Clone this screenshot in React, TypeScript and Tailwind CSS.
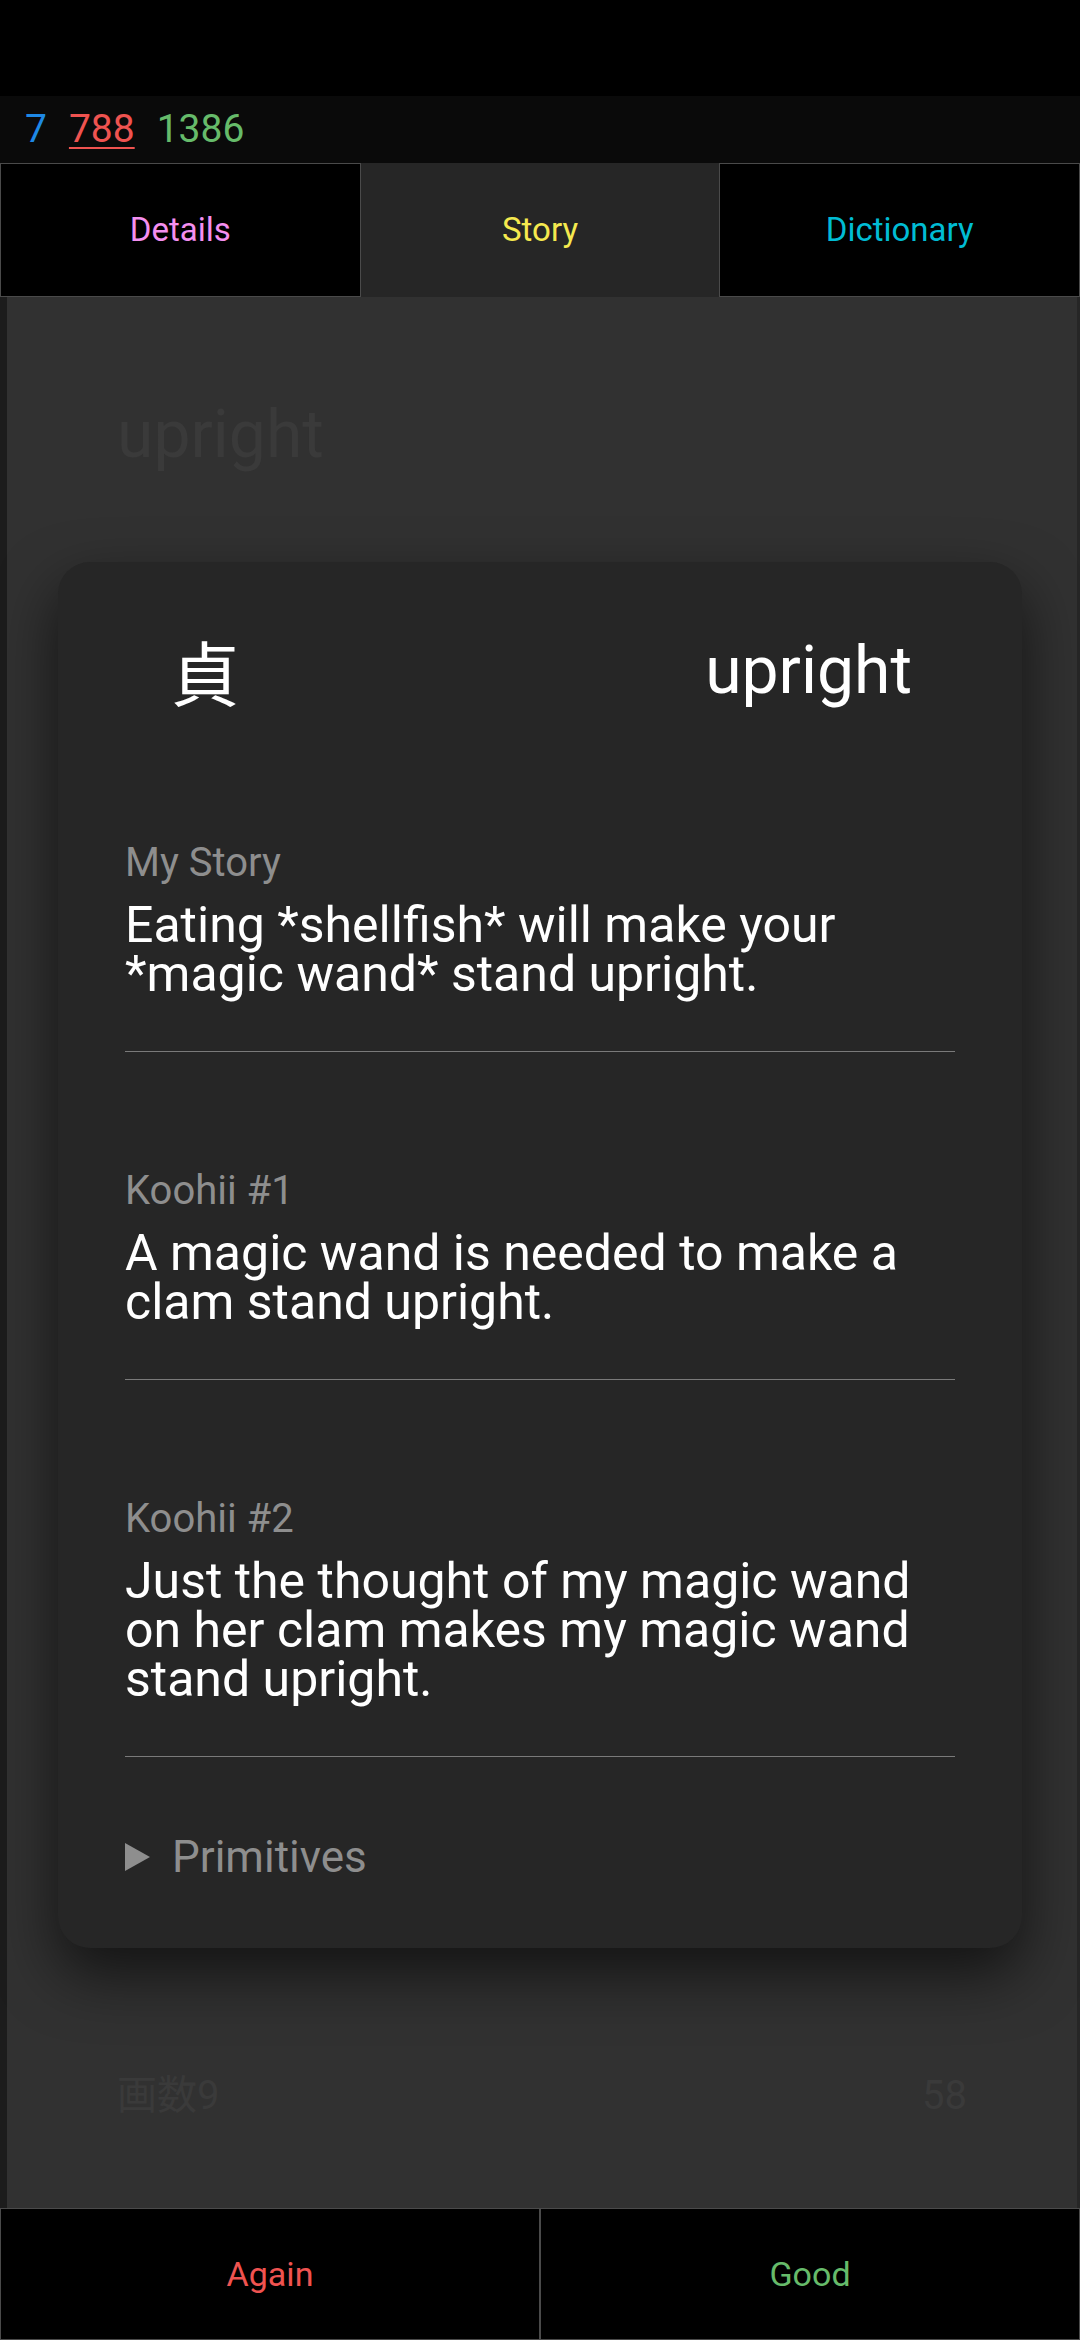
import type React from "react"

const stories = [
  { label: "My Story", text: "Eating *shellfish* will make your *magic wand* stand upright." },
  { label: "Koohii #1", text: "A magic wand is needed to make a clam stand upright." },
  { label: "Koohii #2", text: "Just the thought of my magic wand on her clam makes my magic wand stand upright." },
]

export default function App() {
  return (
    <div className="w-[1080px] h-[2340px] flex flex-col bg-black font-['Roboto',sans-serif] overflow-hidden">
      <div className="h-[96px] bg-black shrink-0" />

      <div className="h-[67px] shrink-0 bg-[#0a0a0a] flex items-center gap-[22px] px-[25px] text-[39px] leading-none">
        <span className="text-[#1e88e5]">7</span>
        <span className="text-[#ef5350] underline decoration-2 underline-offset-[5px]">788</span>
        <span className="text-[#66bb6a]">1386</span>
      </div>

      <div className="h-[134px] shrink-0 flex text-[33px]">
        <Tab label="Details" color="text-[#f48ff0]" />
        <Tab label="Story" color="text-[#f5e94f]" active />
        <Tab label="Dictionary" color="text-[#00bcd4]" />
      </div>

      <main className="relative flex-1 flex bg-[#313131]">
        <div className="w-[7px] bg-[#1c1c1c]" />
        <div className="flex-1 flex flex-col px-[110px] pt-[98px] pb-[90px]">
          <div className="text-[66px] leading-[80px] text-[#3a3a3a]">upright</div>
          <div className="mt-auto flex items-center justify-between text-[40px] leading-[44px] text-[#3a3a3a]">
            <span className="font-['Roboto','Noto_Sans_CJK_JP',sans-serif]">画数9</span>
            <span>58</span>
          </div>
        </div>
        <div className="w-[3px] bg-[#262626]" />

        <StoryCard />
      </main>

      <div className="h-[132px] shrink-0 flex text-[34px]">
        <button className="flex-1 bg-black border border-[#4a4a4a] text-[#ef5350]">Again</button>
        <button className="flex-1 bg-black border border-[#4a4a4a] text-[#66bb6a]">Good</button>
      </div>
    </div>
  )
}

function Tab({ label, color, active }: { label: string; color: string; active?: boolean }) {
  return (
    <div
      className={`flex-1 flex items-center justify-center ${color} ${
        active ? "bg-[#262626]" : "bg-black border border-[#4a4a4a]"
      }`}
    >
      {label}
    </div>
  )
}

function StoryCard() {
  return (
    <div className="absolute left-[58px] top-[265px] w-[964px] rounded-[32px] bg-[#262626] px-[67px] pt-[69px] pb-[66px] shadow-[0_26px_60px_rgba(0,0,0,0.6)]">
      <div className="h-[80px] flex items-center justify-between pl-[45px] pr-[43px] text-white">
        <span className="text-[70px] leading-none font-['Noto_Sans_CJK_JP',sans-serif]">貞</span>
        <span className="text-[66px] leading-none">upright</span>
      </div>

      <div className="mt-[13px]">
        {stories.map((s) => (
          <section key={s.label} className="pt-[117px] pb-[52px] border-b border-[#7a7a7a]">
            <div className="text-[40px] leading-[44px] text-[#8e8e8e]">{s.label}</div>
            <p className="mt-[16px] max-w-[810px] text-[50px] leading-[49px] text-white">{s.text}</p>
          </section>
        ))}
      </div>

      <div className="pt-[75px] flex items-center gap-[22px] text-[44px] leading-[50px] text-[#8e8e8e]">
        <svg width="25" height="28" viewBox="0 0 25 28" className="shrink-0">
          <polygon points="0,0 25,14 0,28" fill="#8e8e8e" />
        </svg>
        <span>Primitives</span>
      </div>
    </div>
  )
}
